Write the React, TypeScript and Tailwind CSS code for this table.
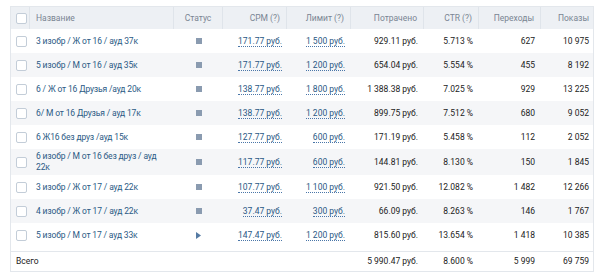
import React from 'react';

type Row = {
  name: string;
  status: 'stop' | 'play';
  cpm: string;
  limit: string;
  spent: string;
  ctr: string;
  clicks: string;
  shows: string;
};

const rows: Row[] = [
  { name: '3 изобр / Ж от 16 / ауд 37к', status: 'stop', cpm: '171.77 руб.', limit: '1 500 руб.', spent: '929.11 руб.', ctr: '5.713 %', clicks: '627', shows: '10 975' },
  { name: '5 изобр / М от 16 / ауд 35к', status: 'stop', cpm: '171.77 руб.', limit: '1 200 руб.', spent: '654.04 руб.', ctr: '5.554 %', clicks: '455', shows: '8 192' },
  { name: '6 / Ж от 16 Друзья /ауд 20к', status: 'stop', cpm: '138.77 руб.', limit: '1 800 руб.', spent: '1 388.38 руб.', ctr: '7.025 %', clicks: '929', shows: '13 225' },
  { name: '6/ М от 16 Друзья / ауд 17к', status: 'stop', cpm: '138.77 руб.', limit: '1 200 руб.', spent: '899.75 руб.', ctr: '7.512 %', clicks: '680', shows: '9 052' },
  { name: '6 Ж16 без друз /ауд 15к', status: 'stop', cpm: '127.77 руб.', limit: '600 руб.', spent: '171.19 руб.', ctr: '5.458 %', clicks: '112', shows: '2 052' },
  { name: '6 изобр / М от 16 без друз / ауд 22к', status: 'stop', cpm: '117.77 руб.', limit: '600 руб.', spent: '144.81 руб.', ctr: '8.130 %', clicks: '150', shows: '1 845' },
  { name: '3 изобр / Ж от 17 / ауд 22к', status: 'stop', cpm: '107.77 руб.', limit: '1 100 руб.', spent: '921.50 руб.', ctr: '12.082 %', clicks: '1 482', shows: '12 266' },
  { name: '4 изобр / Ж от 17 / ауд 22к', status: 'stop', cpm: '37.47 руб.', limit: '300 руб.', spent: '66.09 руб.', ctr: '8.263 %', clicks: '146', shows: '1 767' },
  { name: '5 изобр / М от 17 / ауд 33к', status: 'play', cpm: '147.47 руб.', limit: '1 200 руб.', spent: '815.60 руб.', ctr: '13.654 %', clicks: '1 418', shows: '10 385' },
];

const cols = 'grid grid-cols-[19px_144px_49px_64px_64px_73px_55px_62px_54px]';

function Checkbox() {
  return <div className="w-[11px] h-[11px] rounded-[2px] border border-[#c3cdd8] bg-white ml-[5px]" />;
}

function Dotted({ children }: { children: React.ReactNode }) {
  return (
    <span className="text-[#2a5885] border-b border-dotted border-[#4a76a8] leading-[10px]">
      {children}
    </span>
  );
}

export default function App() {
  return (
    <div
      className="w-[604px] h-[279px] bg-white pt-[6px] pl-[10px]"
      style={{ fontFamily: 'Roboto, "Liberation Sans", sans-serif' }}
    >
      <div className="w-[584px] border border-[#e3e7ec] text-[8.5px] text-[#222]">
        <div className={`${cols} h-[22px] bg-[#edf0f4] text-[#7a8593] items-center`}>
          <div className="flex items-center h-full border-r border-[#dfe4ea]">
            <Checkbox />
          </div>
          <div className="pl-[6px] h-full flex items-center border-r border-[#dfe4ea]">Название</div>
          <div className="h-full flex items-center justify-center border-r border-[#dfe4ea]">Статус</div>
          <div className="h-full flex items-center justify-end pr-[6px] border-r border-[#dfe4ea]">CPM (?)</div>
          <div className="h-full flex items-center justify-end pr-[6px] border-r border-[#dfe4ea]">Лимит (?)</div>
          <div className="h-full flex items-center justify-end pr-[6px] border-r border-[#dfe4ea]">Потрачено</div>
          <div className="h-full flex items-center justify-end pr-[6px] border-r border-[#dfe4ea]">CTR (?)</div>
          <div className="h-full flex items-center justify-end pr-[6px] border-r border-[#dfe4ea]">Переходы</div>
          <div className="h-full flex items-center justify-end pr-[6px]">Показы</div>
        </div>
        {rows.map((r, i) => (
          <div
            key={i}
            className={`${cols} items-center ${i === 5 ? 'h-[26px]' : 'h-[24px]'} ${i % 2 === 1 ? 'bg-[#f5f6f8]' : 'bg-white'}`}
          >
            <div className="flex items-center">
              <Checkbox />
            </div>
            <div className="pl-[6px] pr-[4px] text-[#2b5a85] leading-[11px] tracking-[-0.15px]">{r.name}</div>
            <div className="flex justify-center">
              {r.status === 'stop' ? (
                <div className="w-[6px] h-[6px] bg-[#8a9bb0]" />
              ) : (
                <svg width="5" height="7" viewBox="0 0 5 7">
                  <path d="M0 0 L5 3.5 L0 7 Z" fill="#557aa3" />
                </svg>
              )}
            </div>
            <div className="text-right pr-[5px]"><Dotted>{r.cpm}</Dotted></div>
            <div className="text-right pr-[6px]"><Dotted>{r.limit}</Dotted></div>
            <div className="text-right pr-[6px]">{r.spent}</div>
            <div className="text-right pr-[6px]">{r.ctr}</div>
            <div className="text-right pr-[6px]">{r.clicks}</div>
            <div className="text-right pr-[6px]">{r.shows}</div>
          </div>
        ))}
        <div className="h-[4px] bg-white" />
        <div className={`${cols} h-[20px] items-center border-t border-[#e3e7ec]`}>
          <div className="col-span-5 pl-[5px]">Всего</div>
          <div className="text-right pr-[6px]">5 990.47 руб.</div>
          <div className="text-right pr-[6px]">8.600 %</div>
          <div className="text-right pr-[6px]">5 999</div>
          <div className="text-right pr-[6px]">69 759</div>
        </div>
      </div>
    </div>
  );
}
